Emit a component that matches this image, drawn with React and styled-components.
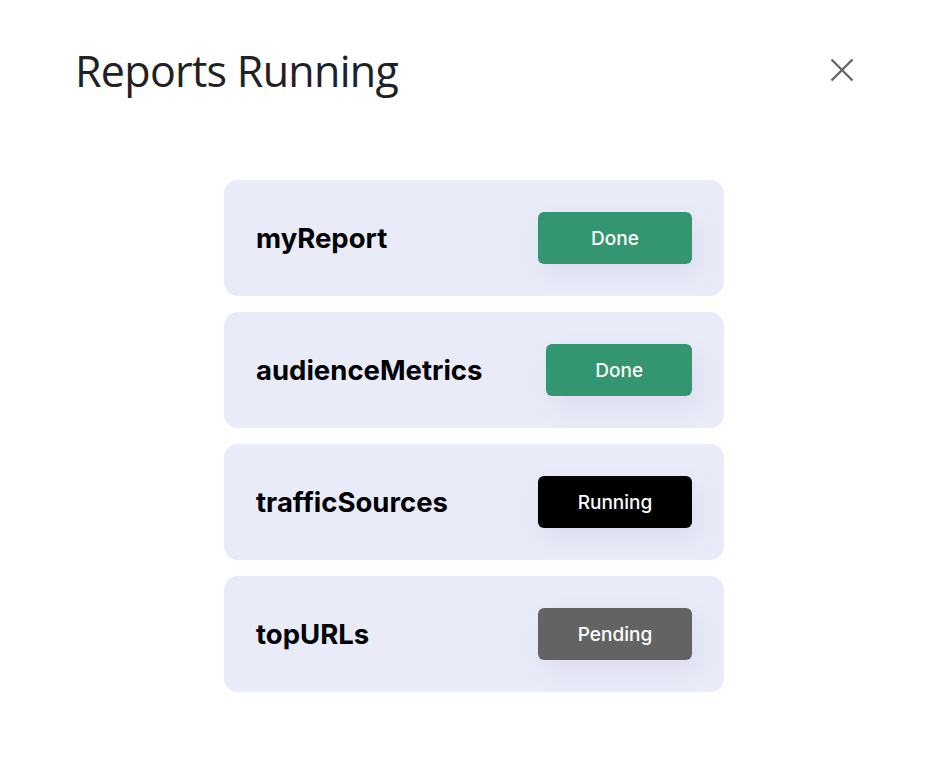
import styled, { createGlobalStyle } from "styled-components";

const GlobalStyle = createGlobalStyle`
  body {
    margin: 0;
    background: #fff;
    font-family: "Inter", "Liberation Sans", sans-serif;
  }
`;

const reports = [
  { name: "myReport", status: "Done" },
  { name: "audienceMetrics", status: "Done" },
  { name: "trafficSources", status: "Running" },
  { name: "topURLs", status: "Pending" },
];

const statusColors = {
  Done: "#349571",
  Running: "#000000",
  Pending: "#636363",
};

export default function App() {
  return (
    <>
      <GlobalStyle />
      <Dialog>
        <Header>
          <Title>Reports Running</Title>
          <CloseBtn aria-label="Close">
            <svg width="24" height="24" viewBox="0 0 24 24">
              <path
                d="M1.5 1.5 L22.5 22.5 M22.5 1.5 L1.5 22.5"
                stroke="#666"
                strokeWidth="2.4"
                fill="none"
              />
            </svg>
          </CloseBtn>
        </Header>
        <List>
          {reports.map((r) => (
            <Card key={r.name}>
              <Name>{r.name}</Name>
              <Status color={statusColors[r.status]}>{r.status}</Status>
            </Card>
          ))}
        </List>
      </Dialog>
    </>
  );
}

const Dialog = styled.div`
  width: 940px;
  height: 772px;
  box-sizing: border-box;
  padding: 42px 0 0 75px;
`;

const Header = styled.div`
  display: flex;
  align-items: flex-start;
  justify-content: space-between;
  padding-right: 86px;
`;

const Title = styled.h1`
  margin: 0;
  font-family: "Open Sans", "Liberation Sans", sans-serif;
  font-weight: 400;
  font-size: 43px;
  line-height: 58px;
  letter-spacing: -0.7px;
  color: #202124;
`;

const CloseBtn = styled.button`
  margin-top: 16px;
  width: 24px;
  height: 24px;
  padding: 0;
  border: none;
  background: none;
  display: flex;
  cursor: pointer;
`;

const List = styled.div`
  display: flex;
  flex-direction: column;
  gap: 16px;
  width: 500px;
  margin: 80px 0 0 149px;
`;

const Card = styled.div`
  display: flex;
  align-items: center;
  gap: 64px;
  height: 116px;
  box-sizing: border-box;
  padding: 0 32px;
  border-radius: 14px;
  background: #eaebf8;
`;

const Name = styled.span`
  flex: none;
  font-size: 27.5px;
  font-weight: 700;
  letter-spacing: 0;
  color: #000;
`;

const Status = styled.div`
  margin-left: auto;
  width: 154px;
  min-width: 0;
  flex-shrink: 1;
  height: 52px;
  border-radius: 6px;
  display: flex;
  align-items: center;
  justify-content: center;
  background: ${({ color }) => color};
  color: #fff;
  font-size: 19px;
  font-weight: 500;
  box-shadow: 6px 10px 24px rgba(90, 100, 170, 0.1);
`;
